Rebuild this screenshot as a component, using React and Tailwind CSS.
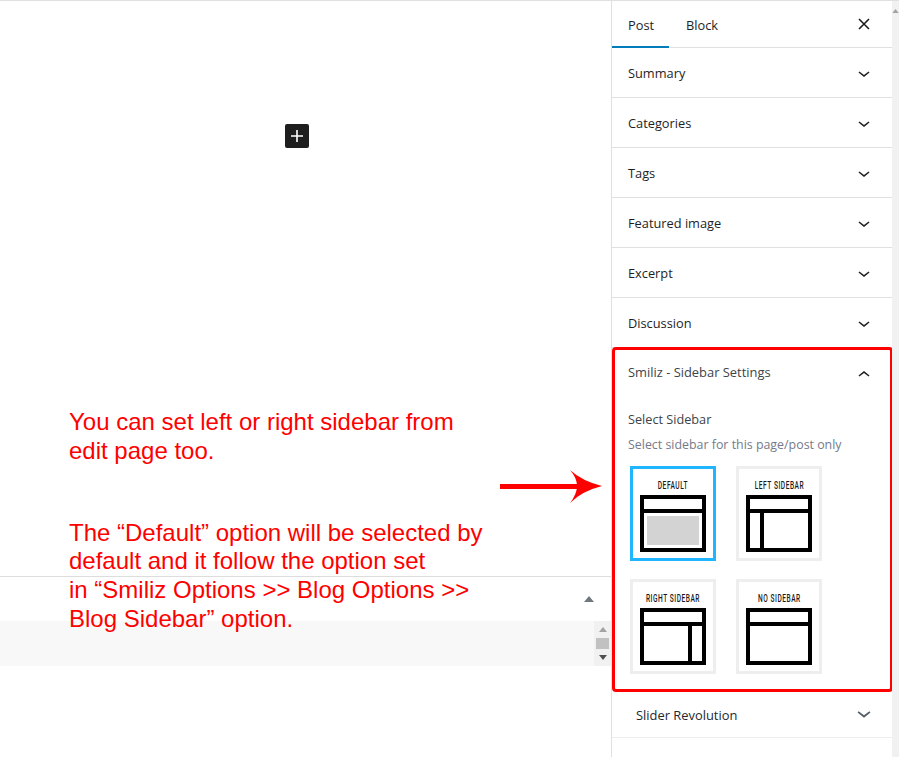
import React from 'react';

const Chevron = ({ up = false, size = 24, className = 'text-[#1e1e1e]' }) => (
  <svg viewBox="0 0 24 24" width={size} height={size} fill="currentColor" className={className}>
    <path d={up ? 'M6.5 12.4L12 8l5.5 4.4-.9 1.2L12 10l-4.6 3.6-.9-1.2z' : 'M17.5 11.6L12 16l-5.5-4.4.9-1.2L12 14l4.6-3.6.9 1.2z'} />
  </svg>
);

const PanelRow = ({ title }) => (
  <div className="flex h-[50px] items-center justify-between border-b border-[#e0e0e0] pl-4 pr-4">
    <span className="pt-[2px] text-[12.8px] text-[#1e1e1e]">{title}</span>
    <Chevron />
  </div>
);

const Tile = ({ label, selected = false, children }) => (
  <div className={`flex h-[95px] w-[86px] flex-col items-center border-[3px] bg-white ${selected ? 'border-[#1fb6ff]' : 'border-[#eeeeee]'}`}>
    <span className="mt-[9px] h-[16px] scale-x-[0.66] whitespace-nowrap font-['Roboto',sans-serif] text-[10px] leading-[16px] font-medium tracking-[0.8px] text-[#1a1a1a]">
      {label}
    </span>
    <svg viewBox="0 0 66 57" width="66" height="57" className="mt-px shrink-0">
      <rect x="2" y="2" width="62" height="53" fill="none" stroke="#000" strokeWidth="4" />
      <rect x="2" y="14" width="62" height="4" fill="#000" />
      {children}
    </svg>
  </div>
);

const App = () => {
  return (
    <div className="relative flex h-[757px] w-[899px] overflow-hidden bg-white font-['Open_Sans',sans-serif]">
      {/* editor canvas */}
      <div className="flex w-[612px] shrink-0 flex-col border-t border-r border-[#e0e0e0]">
        <div className="ml-[285px] mt-[123px] flex h-6 w-6 items-center justify-center rounded-[2px] bg-[#1e1e1e]">
          <svg viewBox="0 0 24 24" width="24" height="24" fill="#fff">
            <path d="M18 11.2h-5.2V6h-1.6v5.2H6v1.6h5.2V18h1.6v-5.2H18z" />
          </svg>
        </div>

        {/* meta boxes */}
        <div className="mt-[428px] flex h-[45px] items-center justify-end border-t border-[#dddddd] pr-[16px]">
          <svg viewBox="0 0 12 8" width="12" height="8" fill="#72777c">
            <path d="M6 1l5 6H1z" />
          </svg>
        </div>
        <div className="flex h-[45px] justify-end bg-[#f8f8f8]">
          <div className="flex w-[17px] flex-col items-center bg-[#f1f1f1] pt-[6px]">
            <svg viewBox="0 0 8 5" width="8" height="5" fill="#a3a3a3"><path d="M4 0l4 5H0z" /></svg>
            <div className="mt-[6px] h-[11px] w-[13px] bg-[#c1c1c1]" />
            <svg viewBox="0 0 8 5" width="8" height="5" fill="#505050" className="mt-[6px]"><path d="M4 5l4-5H0z" /></svg>
          </div>
        </div>
      </div>

      {/* settings sidebar */}
      <div className="w-[280px] shrink-0 border-t border-[#e0e0e0]">
        <div className="flex h-[47px] items-center justify-between border-b border-[#e0e0e0] pr-4">
          <div className="flex h-full">
            <div className="flex h-[47px] w-[57px] items-center border-b-2 border-[#007cba] pl-4 pt-[4px] text-[12.8px] text-[#1e1e1e]">Post</div>
            <div className="flex items-center pl-[17px] pt-[4px] text-[12.8px] text-[#1e1e1e]">Block</div>
          </div>
          <svg viewBox="0 0 24 24" width="24" height="24" fill="none" stroke="#1e1e1e" strokeWidth="1.6">
            <path d="M7 7l10 10M17 7L7 17" />
          </svg>
        </div>
        <PanelRow title="Summary" />
        <PanelRow title="Categories" />
        <PanelRow title="Tags" />
        <PanelRow title="Featured image" />
        <PanelRow title="Excerpt" />
        <PanelRow title="Discussion" />

        {/* highlighted panel */}
        <div className="-mt-px mr-[-1px] h-[345px] rounded-[4px] border-[3px] border-[#ff0000] bg-white pl-[13px] pr-[14px]">
          <div className="flex h-[44px] items-center justify-between">
            <span className="pt-[2px] text-[12.9px] font-medium text-[#3c434a]">Smiliz - Sidebar Settings</span>
            <Chevron up className="mt-[6px] text-[#1e1e1e]" />
          </div>
          <div className="mt-[15px] text-[12.7px] leading-[20px] font-medium text-[#3c434a]">Select Sidebar</div>
          <div className="mt-[6px] text-[12.4px] leading-[20px] text-[#757a8a]">Select sidebar for this page/post only</div>
          <div className="ml-[2px] mt-[11px] grid w-[192px] grid-cols-[86px_86px] gap-x-[20px] gap-y-[18px]">
            <Tile label="DEFAULT" selected>
              <rect x="7" y="21" width="52" height="29" fill="#d3d3d3" />
            </Tile>
            <Tile label="LEFT SIDEBAR">
              <rect x="14" y="16" width="4" height="38" fill="#000" />
            </Tile>
            <Tile label="RIGHT SIDEBAR">
              <rect x="48" y="16" width="4" height="38" fill="#000" />
            </Tile>
            <Tile label="NO SIDEBAR" />
          </div>
        </div>

        <div className="flex h-[46px] items-center justify-between border-b border-[#eeeeee] pl-6 pr-[14px]">
          <span className="pt-[2px] text-[12.9px] text-[#23282d]">Slider Revolution</span>
          <Chevron size={28} className="mb-[4px] text-[#555d66]" />
        </div>
      </div>

      {/* window scrollbar */}
      <div className="flex flex-1 justify-center border-t border-[#e0e0e0] bg-[#f1f1f1] pt-[8px]">
        <svg viewBox="0 0 8 5" width="7" height="4" fill="#a3a3a3"><path d="M4 0l4 5H0z" /></svg>
      </div>

      {/* annotation over the screenshot */}
      <div className="absolute left-[69px] top-[408px] w-[430px] font-['Liberation_Sans',sans-serif] text-[24px] leading-[28.8px] text-[#ff0000]">
        <p>You can set left or right sidebar from<br />edit page too.</p>
        <p className="mt-[53px]">
          The “Default” option will be selected by<br />
          default and it follow the option set<br />
          in “Smiliz Options &gt;&gt; Blog Options &gt;&gt;<br />
          Blog Sidebar” option.
        </p>
      </div>

      <svg viewBox="0 0 104 36" width="104" height="36" className="absolute left-[499px] top-[468px]" fill="#ff0000">
        <rect x="1" y="16" width="78" height="5" />
        <path d="M71 2 Q83 13 103 18 Q83 23 71 35 Q78 26 78 18 Q78 10 71 2z" />
      </svg>
    </div>
  );
};

export default App;
